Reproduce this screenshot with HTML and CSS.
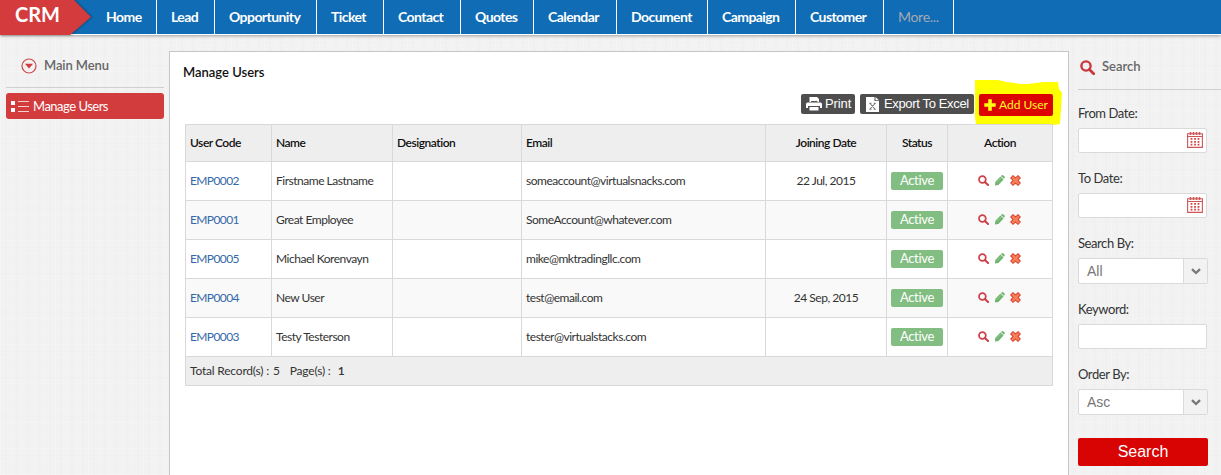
FILE: index.html
```
<!DOCTYPE html>
<html lang="en">
<head>
<meta charset="utf-8">
<title>CRM - Manage Users</title>
<link rel="stylesheet" href="styles.css">
</head>
<body>
<svg class="defs" width="0" height="0" aria-hidden="true">
  <symbol id="magnifier" viewBox="0 0 14 14"><circle cx="5.6" cy="5.6" r="4.3" fill="none" stroke="currentColor" stroke-width="2.2"/><path d="M8.8 8.8 12.8 12.8" stroke="currentColor" stroke-width="2.6" stroke-linecap="round"/></symbol>
  <symbol id="pencil" viewBox="0 0 12 12"><path d="M1 11.5 1.4 7.5 7 1.6 10.4 4.9 4.8 10.8ZM7.6 1 8.6.3Q9.5-.2 10.3.5L11.5 1.7Q12.1 2.5 11.5 3.3L10.8 4.2Z" fill="#6fb56f"/><path d="M3 8.3 7.6 3.4" stroke="#a4d0a0" stroke-width=".8"/></symbol>
  <symbol id="cross" viewBox="0 0 12 12"><path d="M3.2.8 6 3.2 8.8.8 11.2 3.2 8.8 6 11.2 8.8 8.8 11.2 6 8.8 3.2 11.2.8 8.8 3.2 6 .8 3.2Z" fill="#f5805a" stroke="#d8402a" stroke-width="1.1"/></symbol>
  <symbol id="calendar" viewBox="0 0 16 16"><path d="M.6 1.7H15.4V15.4H.6ZM.6 4.5H15.4" fill="none" stroke="#cf5557" stroke-width="1.1"/><path d="M3.5 0V3M6.5 0V3M9.5 0V3M12.5 0V3" stroke="#cf5557" stroke-width="1.6"/><path d="M4.5 6V13.6M8 6V13.6M11.5 6V13.6" stroke="#cf4547" stroke-width="1.8" stroke-dasharray="1.8 1.1"/></symbol>
  <symbol id="chevron" viewBox="0 0 10 7"><path d="M1 1.2 5 5 9 1.2" fill="none" stroke="#777" stroke-width="2.3"/></symbol>
</svg>
<header class="topbar">
  <a class="logo"><svg class="logo-shape" width="92" height="35" viewBox="0 0 92 35"><path d="M0 0H74L91 17 70 35H0Z" fill="#d33b3d"/></svg><span class="logo-text">CRM</span></a>
  <nav class="nav">
    <a>Home</a><a>Lead</a><a>Opportunity</a><a>Ticket</a><a>Contact</a><a>Quotes</a><a>Calendar</a><a>Document</a><a>Campaign</a><a>Customer</a><a class="more">More...</a>
  </nav>
</header>
<div class="layout">
  <aside class="menu">
    <h2 class="menu-title"><svg width="16" height="16" viewBox="0 0 16 16"><circle cx="8" cy="8" r="7" fill="none" stroke="#cf484b" stroke-width="1.2"/><path d="M4 5.8H12L8 10.6Z" fill="#cf3b3e"/></svg><span>Main Menu</span></h2>
    <a class="menu-item"><svg width="19" height="13" viewBox="0 0 19 13"><path d="M0 1H4V5H0ZM0 8H4V12H0Z" fill="#fff"/><path d="M7 1.5H18M7 6.5H18M7 11.5H18" stroke="#f6cfcf"/></svg><span>Manage Users</span></a>
  </aside>
  <main class="panel">
    <h1 class="title">Manage Users</h1>
    <div class="actions">
      <a class="btn print"><svg width="16" height="14" viewBox="0 0 16 14"><path d="M3.5 0H11L13 2V5H3.5Z" fill="#fff"/><path d="M0 7Q0 5.5 1.5 5.5H14.5Q16 5.5 16 7V11H14V9H2V11H0Z" fill="#fff"/><path d="M3.5 10H12.5V13.5H3.5Z" fill="#fff"/><path d="M5 4.5H11.5" stroke="#555"/></svg><span>Print</span></a>
      <a class="btn excel"><svg width="13" height="15" viewBox="0 0 13 15"><path d="M0 0H8.5V4H13V15H0ZM9.5 0 13 3.2H9.5Z" fill="#fff"/><path d="M4 6.5 9 12M9 6.5 4 12M3.3 6.3H5.5M7.7 6.3H9.8M3.3 12.2H5.5M7.7 12.2H9.8" stroke="#777" stroke-width="1.1"/></svg><span>Export To Excel</span></a>
      <span class="add-wrap">
        <svg class="marker" width="88" height="49" viewBox="0 0 88 49"><path d="M1 1 24 1Q38 5 54 5L69 3 84 3 85 10 88 14 87 30 86 45Q60 49 45 48L2 45 1 38Z" fill="#ff0"/></svg>
        <a class="btn add"><svg width="12" height="12" viewBox="0 0 12 12"><path d="M6 .3V11.7M.3 6H11.7" stroke="#ffff10" stroke-width="3.6"/></svg><span>Add User</span></a>
      </span>
    </div>
    <table class="users">
      <colgroup><col class="c1"><col class="c2"><col class="c3"><col class="c4"><col class="c5"><col class="c6"><col class="c7"></colgroup>
      <thead><tr><th>User Code</th><th>Name</th><th>Designation</th><th>Email</th><th class="mid">Joining Date</th><th class="mid">Status</th><th class="mid">Action</th></tr></thead>
      <tbody>
        <tr><td><a class="code">EMP0002</a></td><td>Firstname Lastname</td><td></td><td>someaccount@virtualsnacks.com</td><td class="mid">22 Jul, 2015</td><td class="mid"><span class="badge">Active</span></td><td><div class="tools"><svg><use href="#magnifier"/></svg><svg><use href="#pencil"/></svg><svg><use href="#cross"/></svg></div></td></tr>
        <tr><td><a class="code">EMP0001</a></td><td>Great Employee</td><td></td><td>SomeAccount@whatever.com</td><td></td><td class="mid"><span class="badge">Active</span></td><td><div class="tools"><svg><use href="#magnifier"/></svg><svg><use href="#pencil"/></svg><svg><use href="#cross"/></svg></div></td></tr>
        <tr><td><a class="code">EMP0005</a></td><td>Michael Korenvayn</td><td></td><td>mike@mktradingllc.com</td><td></td><td class="mid"><span class="badge">Active</span></td><td><div class="tools"><svg><use href="#magnifier"/></svg><svg><use href="#pencil"/></svg><svg><use href="#cross"/></svg></div></td></tr>
        <tr><td><a class="code">EMP0004</a></td><td>New User</td><td></td><td>test@email.com</td><td class="mid">24 Sep, 2015</td><td class="mid"><span class="badge">Active</span></td><td><div class="tools"><svg><use href="#magnifier"/></svg><svg><use href="#pencil"/></svg><svg><use href="#cross"/></svg></div></td></tr>
        <tr><td><a class="code">EMP0003</a></td><td>Testy Testerson</td><td></td><td>tester@virtualstacks.com</td><td></td><td class="mid"><span class="badge">Active</span></td><td><div class="tools"><svg><use href="#magnifier"/></svg><svg><use href="#pencil"/></svg><svg><use href="#cross"/></svg></div></td></tr>
      </tbody>
      <tfoot><tr><td colspan="7"><div class="totals"><span>Total Record(s) :</span><span class="count">5</span><span>Page(s) :</span><b class="page">1</b></div></td></tr></tfoot>
    </table>
  </main>
  <aside class="search">
    <h2 class="search-title"><svg width="15" height="15"><use href="#magnifier"/></svg><span>Search</span></h2>
    <div class="field"><label>From Date:</label><div class="input"><svg width="16" height="16"><use href="#calendar"/></svg></div></div>
    <div class="field"><label>To Date:</label><div class="input"><svg width="16" height="16"><use href="#calendar"/></svg></div></div>
    <div class="field"><label>Search By:</label><div class="select"><span class="value">All</span><span class="arrow"><svg width="10" height="7"><use href="#chevron"/></svg></span></div></div>
    <div class="field keyword"><label>Keyword:</label><div class="input"></div></div>
    <div class="field"><label>Order By:</label><div class="select"><span class="value">Asc</span><span class="arrow"><svg width="10" height="7"><use href="#chevron"/></svg></span></div></div>
    <a class="submit">Search</a>
  </aside>
</div>
</body>
</html>
```
FILE: styles.css
```
* { box-sizing: border-box; }
body {
  margin: 0;
  height: 475px;
  overflow: hidden;
  display: flex;
  flex-direction: column;
  font-family: Lato, sans-serif;
  font-size: 12px;
  color: #333;
  background-color: #f2f2f2;
  background-image:
    repeating-linear-gradient(90deg, rgba(255,255,255,.16) 0 1px, transparent 1px 5px, rgba(0,0,0,.008) 5px 7px, transparent 7px 11px),
    repeating-linear-gradient(0deg, rgba(255,255,255,.16) 0 1px, transparent 1px 6px, rgba(0,0,0,.008) 6px 7px, transparent 7px 13px);
}
.defs { display: none; }
svg { display: block; flex: none; }
h1, h2 { margin: 0; }

.topbar {
  display: flex;
  flex: none;
  height: 35px;
  background: #106cb4;
  border-bottom: 1px solid #fff;
  box-shadow: 0 1px 3px rgba(0,0,0,.35);
}
.logo { display: grid; width: 92px; height: 35px; }
.logo-shape, .logo-text { grid-area: 1 / 1; }
.logo-shape { filter: drop-shadow(1px 0 1px rgba(0,0,0,.35)); }
.logo-text {
  z-index: 1;
  padding-left: 15px;
  font-size: 20px;
  font-weight: 700;
  line-height: 28px;
  color: #fff;
}
.nav { display: grid; grid-template-columns: 65px 58px 102px 67px 77px 73px 83px 91px 88px 88px 70px; }
.nav a {
  padding-left: 14px;
  border-right: 1px solid #fff;
  font-size: 14px;
  font-weight: 700;
  line-height: 33px;
  letter-spacing: -.57px;
  white-space: nowrap;
  color: #fff;
}
.nav .more { font-weight: 400; color: #a5a9b4; letter-spacing: -.3px; }

.layout { display: grid; grid-template-columns: 169px 900px 152px; flex: 1; }

.menu { padding: 16px 5px 0 6px; }
.menu-title {
  display: flex;
  align-items: center;
  gap: 7px;
  height: 37px;
  padding: 0 0 9px 15px;
  border-bottom: 1px solid #cfcfd4;
  font-size: 13px;
  font-weight: 600;
  letter-spacing: -.1px;
  color: #666;
}
.menu-title svg { margin-top: 2px; }
.menu-item {
  display: flex;
  align-items: center;
  gap: 3px;
  height: 26px;
  margin-top: 5px;
  padding-left: 5px;
  border-radius: 3px;
  background: #d33c3d;
  color: #fff;
  font-size: 13px;
  letter-spacing: -.5px;
}

.panel { margin-top: 16px; padding: 0 0 0 15px; background: #fff; border: 1px solid #c6c6c6; border-bottom: 0; }
.title { height: 42px; margin-left: -2px; font-size: 13px; font-weight: 600; line-height: 41px; color: #111; }
.actions { display: flex; gap: 5px; width: 868px; height: 30px; justify-content: flex-end; }
.btn {
  display: flex;
  align-items: center;
  height: 20px;
  border-radius: 2px;
  background: #4e4e4e;
  color: #fff;
  font: 13px/20px "Liberation Sans", Arial, sans-serif;
  white-space: nowrap;
}
.print { width: 54px; padding-left: 5px; gap: 3px; letter-spacing: -.1px; }
.excel { width: 114px; padding-left: 6px; gap: 5px; letter-spacing: -.35px; }
.add-wrap { position: relative; }
.marker { position: absolute; left: -5px; top: -15px; }
.add { position: relative; width: 74px; height: 22px; padding-left: 5px; gap: 3px; background: #dc0303; color: #fff62b; font: 12px/22px Lato, sans-serif; }

.users { position: relative; width: 868px; table-layout: fixed; border-collapse: collapse; }
.c1 { width: 86px; }
.c2 { width: 121px; }
.c3 { width: 129px; }
.c4 { width: 244px; }
.c5 { width: 121px; }
.c6 { width: 61px; }
.c7 { width: 105px; }
.users th, .users td { padding: 0 0 0 4px; border: 1px solid #d9d9d9; text-align: left; letter-spacing: -.48px; }
.users th { height: 37px; padding-bottom: 2px; background: #eee; color: #111; font-size: 12px; font-weight: 600; }
.users tbody td { height: 39px; padding-bottom: 1px; background: #fff; }
.users tbody tr:nth-child(even) td { background: #f9f9f9; }
.users .mid { padding-left: 0; text-align: center; }
.users tfoot td { height: 29px; padding-bottom: 1px; background: #eee; letter-spacing: -.2px; }
.users .code { color: #3568a8; letter-spacing: -.6px; }
.badge { display: inline-block; width: 52px; height: 18px; margin-top: 1px; border-radius: 2px; background: #82bd82; color: #fff; font-size: 13px; line-height: 17px; letter-spacing: -.3px; }
.tools { display: flex; align-items: center; gap: 5px; padding: 0 0 1px 26px; color: #ce4048; }
.tools svg { width: 11px; height: 11px; }
.totals { display: flex; }
.count { margin: 0 10px 0 4px; }
.page { margin-left: 7px; font-weight: 600; }

.search { padding: 16px 0 0 9px; }
.search-title {
  display: flex;
  align-items: center;
  gap: 7px;
  height: 39px;
  padding: 0 0 8px 2px;
  border-bottom: 1px solid #cfcfcf;
  font-size: 13px;
  font-weight: 600;
  color: #666;
}
.search-title svg { color: #c9363c; margin-top: 3px; }
.field { height: 65px; padding-top: 15px; font-size: 13px; }
.keyword { margin-top: 1px; }
.field label { display: block; height: 23px; line-height: 17px; letter-spacing: -.42px; color: #333; }
.input { display: flex; align-items: center; justify-content: flex-end; width: 129px; height: 25px; padding: 0 3px 1px 0; background: #fff; border: 1px solid #dadada; border-radius: 2px; }
.select { display: flex; width: 130px; height: 26px; background: #fff; border: 1px solid #dadada; border-radius: 2px; }
.value { flex: 1; padding-left: 8px; color: #777; font: 14px/25px "Liberation Sans", Arial, sans-serif; }
.arrow { display: grid; place-items: center; width: 24px; border-left: 1px solid #dadada; background: #f2f2f2; }
.submit { display: block; width: 130px; height: 28px; margin-top: 22px; border-radius: 2px; background: #d80303; color: #fff; font: 16px/27px "Liberation Sans", Arial, sans-serif; text-align: center; }
```
